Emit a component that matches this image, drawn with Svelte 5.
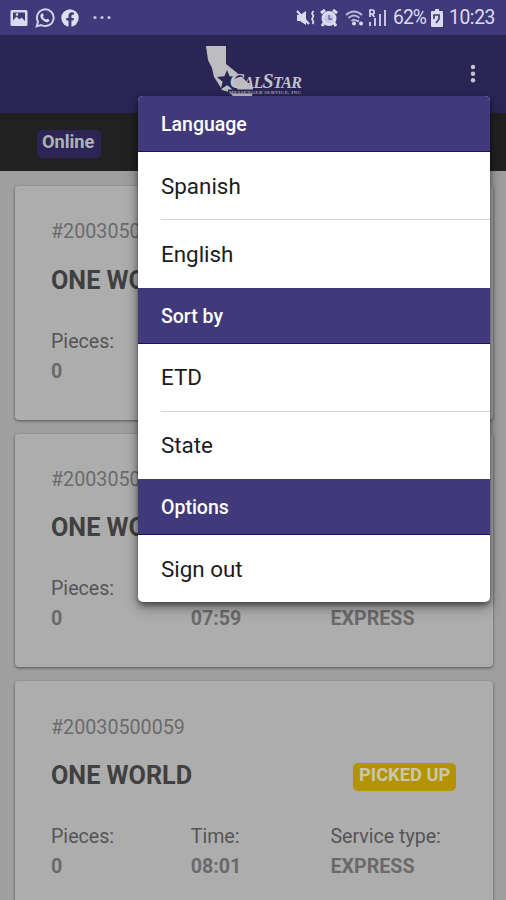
<script>
  const orders = [
    { id: '#20030500057', name: 'ONE WORLD', time: '07:57', service: 'EXPRESS' },
    { id: '#20030500058', name: 'ONE WORLD', time: '07:59', service: 'EXPRESS' },
    { id: '#20030500059', name: 'ONE WORLD', time: '08:01', service: 'EXPRESS' }
  ];
  const groups = [
    { title: 'Language', items: ['Spanish', 'English'] },
    { title: 'Sort by', items: ['ETD', 'State'] },
    { title: 'Options', items: ['Sign out'] }
  ];
</script>

<div class="screen">
  <header class="status">
    <div class="notices">
      <svg width="18" height="18" viewBox="0 0 18 18"><path fill="#dcdaf0" fill-rule="evenodd" d="M2 1h14a1.500 1.500 0 0 1 1.500 1.500v13A1.500 1.500 0 0 1 16 17H2A1.500 1.500 0 0 1 .5 15.500v-13A1.500 1.500 0 0 1 2 1zM3 3.500v8l3.500-4 3 3 2-2 3.500 3.500V3.500z"/><circle cx="7" cy="5.500" r="1.300" fill="#dcdaf0"/></svg>
      <svg width="20" height="20" viewBox="0 0 24 24"><path fill="none" stroke="#d2d0ec" stroke-width="2.400" d="M2 22l1.600-5.500A10 10 0 1 1 7.500 20.400z"/><path fill="#dcdaf0" d="M8 6.500c.8-.5 1.400-.2 1.700.6l.7 1.700c.2.700-.9 1.400-.9 1.800.7 1.500 2 2.700 3.500 3.300.5.100 1.200-1.300 1.800-1.100l2.200 1.100c.7.500-.1 2.300-1.100 2.800-2.200 1-5.100-.5-7-2.500-2.500-2.500-3.500-5.800-.9-7.700z"/></svg>
      <svg class="facebook" width="18" height="18" viewBox="0 0 18 18"><circle cx="9" cy="9" r="8.700" fill="#dfddf2"/><path fill="#403a7a" d="M7.500 18v-6.500H5.300V9h2.200V7c0-2.400 1.400-3.700 3.500-3.700l1.900.2v2.200h-1.100c-1.100 0-1.400.7-1.400 1.400V9h2.400l-.4 2.500h-2V18z"/></svg>
      <svg class="dots" width="20" height="6" viewBox="0 0 20 6"><circle cx="2" cy="2.500" r="1.600"/><circle cx="9" cy="2.500" r="1.600"/><circle cx="16" cy="2.500" r="1.600"/></svg>
    </div>
    <div class="system">
      <svg width="20" height="18" viewBox="0 0 20 18"><path fill="#dcdaf0" d="M1 6h3l6-4v14l-6-4H1z"/><path fill="none" stroke="#dcdaf0" stroke-width="2.200" d="M1 2l12 13"/><path fill="none" stroke="#dcdaf0" stroke-width="1.700" d="M17.500 2L16 4.500 17.500 7 16 10l1.500 3-1 2"/></svg>
      <svg class="alarm" width="18" height="18" viewBox="0 0 18 18"><circle cx="9" cy="9.500" r="6" fill="#c9c6e4" stroke="#dcdaf0" stroke-width="3"/><path fill="none" stroke="#dcdaf0" stroke-width="3" d="M1 4l4-3M17 4l-4-3M4 14l-2 3M14 14l2 3"/><path fill="none" stroke="#6b669f" stroke-width="1.400" d="M9 6v4h3"/></svg>
      <svg class="wifi" width="22" height="18" viewBox="0 0 22 18"><path fill="none" stroke="#bbb7df" stroke-width="1.800" d="M1 6Q9-1 17 6M3.500 9Q9 4 14.500 9M6.500 12Q9 9.500 12 12"/><circle cx="9" cy="14.500" r="2" fill="#dcdaf0"/><circle cx="16" cy="14.500" r="2" fill="#dcdaf0"/><circle cx="13" cy="12" r="1.300" fill="#bbb7df"/></svg>
      <svg class="signal" width="19" height="18" viewBox="0 0 19 18"><path fill="none" stroke="#dcdaf0" stroke-width="1.700" d="M2 8V1h2.200q2 0 2 1.900T4.200 5H2M4 5l2.500 3"/><path fill="#c6c3e4" d="M1 13h2v4H1zM6 9h2v8H6zM11 5h2v12h-2zM16 1h2v16h-2z"/></svg>
      <span class="percent">62%</span>
      <svg class="battery" width="12" height="18" viewBox="0 0 12 18"><path fill="#dcdaf0" d="M4 0h4v2h3q1 0 1 1v14q0 1-1 1H1q-1 0-1-1V3q0-1 1-1h3z"/><path fill="none" stroke="#403a7a" stroke-width="1.700" d="M3 10V6h5v4L5 14"/></svg>
      <span class="clock">10:23</span>
    </div>
  </header>

  <div class="appbar">
    <svg class="logo" width="102" height="54" viewBox="0 0 102 54">
      <path fill="#bdbdc1" d="M4 2h20v18l15 12 12 12-1 8H31l-4-4-7-2-4-7-4-6-2-9-4-8z"/>
      <path fill="#2a2555" d="M25 26l2.600 6.300 7.400.7-5.600 4.800 1.800 7.400-6.200-3.900-6.200 3.900 1.800-7.400L15 33l7.400-.7z"/>
      <path fill="none" stroke="#2a2555" stroke-width="3" d="M40 31Q30 32 29 38t6 8"/>
      <text x="28" y="43.500" class="brand" textLength="72"><tspan font-size="21">C</tspan>AL<tspan font-size="20">S</tspan>TAR</text>
      <path stroke="#2a2555" stroke-width="4" d="M26 47.500H54"/>
      <text x="27" y="49.500" class="tagline" textLength="72">MESSENGER SERVICE, INC</text>
    </svg>
    <svg class="more" width="6" height="20" viewBox="0 0 6 20"><circle cx="3" cy="3" r="2.200"/><circle cx="3" cy="9.700" r="2.200"/><circle cx="3" cy="16.300" r="2.200"/></svg>
  </div>

  <div class="presence"><span>Online</span></div>

  <main>
    {#each orders as order}
      <article>
        <div class="number">{order.id}</div>
        <div class="title"><h2>{order.name}</h2><span class="badge">PICKED UP</span></div>
        <dl>
          <div><dt>Pieces:</dt><dd>0</dd></div>
          <div><dt>Time:</dt><dd>{order.time}</dd></div>
          <div><dt>Service type:</dt><dd>{order.service}</dd></div>
        </dl>
      </article>
    {/each}
  </main>

  <nav class="menu">
    {#each groups as group}
      <section>
        <h3>{group.title}</h3>
        {#each group.items as item}
          <button>{item}</button>
        {/each}
      </section>
    {/each}
  </nav>
</div>

<style>
  .screen {
    position: relative;
    width: 506px;
    height: 900px;
    overflow: hidden;
    background: #9f9f9f;
    font-family: Roboto, sans-serif;
    display: flex;
    flex-direction: column;
  }
  svg { display: block; flex: none; }
  .status {
    flex: none;
    height: 35px;
    box-sizing: border-box;
    background: #403a7a;
    display: flex;
    justify-content: space-between;
    padding: 0 11px 0 10px;
    color: #dcdaf0;
  }
  .notices, .system { display: flex; align-items: center; }
  .notices { gap: 7px; }
  .facebook { margin-left: -1px; }
  .dots { fill: #c6c3e4; margin-left: 7px; }
  .alarm { margin-left: 4px; }
  .wifi { margin-left: 7px; }
  .signal { margin-left: 1px; }
  .percent, .clock { font-size: 19.300px; line-height: 36px; white-space: nowrap; }
  .percent { margin-left: 6px; letter-spacing: -.9px; width: 33px; }
  .battery { margin-left: 5px; }
  .clock { margin-left: 6px; width: 46px; letter-spacing: -.4px; }
  .appbar {
    flex: none;
    height: 78px;
    background: #2a2555;
    display: flex;
    justify-content: center;
    position: relative;
  }
  .logo { margin: 9px 0 0 -1px; overflow: visible; }
  .brand {
    font-family: "Liberation Serif", serif;
    font-style: italic;
    font-weight: bold;
    font-size: 16px;
    fill: #c2c2cc;
  }
  .tagline {
    font-family: "Liberation Serif", serif;
    font-weight: bold;
    font-size: 5px;
    fill: #a5a4b5;
  }
  .more { position: absolute; right: 30px; top: 29px; fill: #c5c4ce; }
  .presence {
    flex: none;
    height: 58px;
    background: #212121;
    box-sizing: border-box;
    padding: 17px 0 0 37px;
  }
  .presence span {
    display: block;
    width: 64px;
    height: 28px;
    box-sizing: border-box;
    padding-left: 5px;
    border-radius: 5px;
    background: #2a2555;
    color: #b0b0b8;
    font-size: 18.200px;
    line-height: 24px;
    font-weight: 700;
  }
  main {
    padding: 15px 13px 0 15px;
    display: flex;
    flex-direction: column;
    gap: 14px;
  }
  article {
    height: 233.600px;
    flex: none;
    box-sizing: border-box;
    padding: 34.400px 37px 0 36px;
    border-radius: 4px;
    background: #adadad;
    box-shadow: 0 1px 3px #666, 0 1px 2px #777;
    color: #505050;
  }
  .number { font-size: 19.700px; line-height: 23px; color: #6b6b6b; }
  .title {
    display: flex;
    justify-content: space-between;
    align-items: center;
    margin-top: 22.400px;
    height: 30px;
  }
  h2 { margin: 0; font-size: 25.200px; line-height: 30px; font-weight: 700; color: #404040; }
  .badge {
    width: 103px;
    height: 28px;
    margin-top: 2px;
    box-sizing: border-box;
    padding-left: 6px;
    border-radius: 5px;
    background: #b39400;
    color: #c9c5b2;
    font-size: 18.300px;
    line-height: 23.500px;
    font-weight: 700;
    white-space: nowrap;
  }
  dl { margin: 33px 0 0; display: flex; }
  dl div { width: 139.700px; flex: none; white-space: nowrap; }
  dt { font-size: 19.600px; line-height: 26px; color: #555; }
  dd { margin: 4px 0 0; font-size: 19.700px; line-height: 26px; font-weight: 700; color: #6a6a6a; }
  .menu {
    position: absolute;
    left: 138px;
    top: 96px;
    width: 352px;
    height: 506px;
    display: flex;
    flex-direction: column;
    border-radius: 5px;
    overflow: hidden;
    background: #fff;
    box-shadow: 0 3px 5px #0006, 0 5px 14px #0006;
  }
  .menu section { display: flex; flex-direction: column; }
  h3 {
    margin: 0;
    height: 56px;
    box-sizing: border-box;
    border-bottom: 1.500px solid #20106a;
    padding-left: 23px;
    background: #403a7a;
    color: #fff;
    font-size: 19.500px;
    font-weight: 500;
    line-height: 58px;
  }
  button {
    appearance: none;
    height: 67px;
    margin: 0 0 0 23px;
    padding: 0;
    border: 0;
    background: none;
    text-align: left;
    font: 400 22.400px Roboto, sans-serif;
    color: #1c1c1c;
  }
  button + button { height: 68.500px; border-top: 1px solid #d4d4d4; }
</style>
